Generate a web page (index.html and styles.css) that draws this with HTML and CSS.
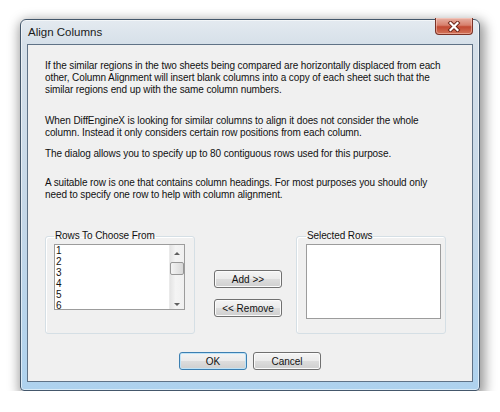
FILE: index.html
```html
<!DOCTYPE html>
<html lang="en">
<head>
    <meta charset="UTF-8">
    <meta name="viewport" content="width=device-width, initial-scale=1.0">
    <link rel="stylesheet" href="styles.css">
</head>
<body>
<div class="window">
    <div class="titlebar">
        <span class="title">Align Columns</span>
        <div class="close-btn">
            <svg width="14" height="11" viewBox="0 0 14 11">
                <path d="M3.5 2 L10.5 9 M10.5 2 L3.5 9" stroke="#6a2418" stroke-width="4" stroke-linecap="square"/>
                <path d="M3.5 2 L10.5 9 M10.5 2 L3.5 9" stroke="#ffffff" stroke-width="2.2" stroke-linecap="square"/>
            </svg>
        </div>
    </div>
    <div class="client">
        <p class="para p1">If the similar regions in the two sheets being compared are horizontally displaced from each<br>
            other, Column Alignment will insert blank columns into a copy of each sheet such that the<br>
            similar regions end up with the same column numbers.</p>
        <p class="para p2">When DiffEngineX is looking for similar columns to align it does not consider the whole<br>
            column. Instead it only considers certain row positions from each column.</p>
        <p class="para p3">The dialog allows you to specify up to 80 contiguous rows used for this purpose.</p>
        <p class="para p4">A suitable row is one that contains column headings. For most purposes you should only<br>
            need to specify one row to help with column alignment.</p>

        <div class="lists">
            <fieldset class="group group-left">
                <legend>Rows To Choose From</legend>
                <div class="listbox listbox-rows">
                    <ul class="items">
                        <li>1</li>
                        <li>2</li>
                        <li>3</li>
                        <li>4</li>
                        <li>5</li>
                        <li>6</li>
                    </ul>
                    <div class="scrollbar">
                        <div class="arrow arrow-up"></div>
                        <div class="track"><div class="thumb"></div></div>
                        <div class="arrow arrow-down"></div>
                    </div>
                </div>
            </fieldset>
            <div class="move-buttons">
                <button class="btn">Add &gt;&gt;</button>
                <button class="btn">&lt;&lt; Remove</button>
            </div>
            <fieldset class="group group-right">
                <legend>Selected Rows</legend>
                <div class="listbox listbox-selected"></div>
            </fieldset>
        </div>

        <div class="dialog-buttons">
            <button class="btn btn-default">OK</button>
            <button class="btn">Cancel</button>
        </div>
    </div>
</div>
</body>
</html>
```

FILE: styles.css
```css
body {
    margin: 0;
    background-color: #FFFFFF;
    font-family: "Liberation Sans", Arial, sans-serif;
    color: #111;
}

.window {
    margin: 19px 0 0 20px;
    width: 460px;
    height: 372px;
    box-sizing: border-box;
    padding: 0 6px 8px 6px;
    display: flex;
    flex-direction: column;
    border: 1px solid #44576b;
    border-radius: 6px 6px 4px 4px;
    background: linear-gradient(to bottom, #e4eaf0 0px, #d6e0e9 24px, #c4d7e8 55%, #aed2ee 100%);
    box-shadow: 2px 4px 12px 3px rgba(0, 0, 0, 0.4), inset 0 0 0 1px rgba(255, 255, 255, 0.55);
}

.titlebar {
    height: 24px;
    display: flex;
    align-items: center;
    justify-content: space-between;
}

.title {
    margin-left: 1px;
    font-size: 11.5px;
    color: #1a1a1a;
}

.close-btn {
    align-self: flex-start;
    margin-top: -2px;
    width: 38px;
    height: 17px;
    box-sizing: border-box;
    display: flex;
    align-items: center;
    justify-content: center;
    border: 1px solid #7a3226;
    border-top: none;
    border-radius: 0 0 4px 4px;
    background: linear-gradient(to bottom, #e7b1a4 0%, #d7806d 45%, #c24a33 55%, #d2745a 100%);
    box-shadow: inset 0 0 0 1px rgba(255, 220, 210, 0.45);
}

.client {
    flex: 1;
    background-color: #f0f0f0;
    border: 1px solid #5f7286;
    padding: 15px 17px 0 17px;
}

.para {
    margin: 0;
    font-size: 10px;
    line-height: 12px;
    letter-spacing: -0.1px;
    white-space: nowrap;
}

.p2 {
    margin-top: 19px;
}

.p3 {
    margin-top: 9px;
}

.p4 {
    margin-top: 17px;
}

.lists {
    margin-top: 29px;
    display: flex;
}

.group {
    margin: 0;
    min-width: 0;
    width: 150px;
    box-sizing: border-box;
    border: 1px solid #d5dfe5;
    border-radius: 3px;
    box-shadow: inset 1px 1px 0 #ffffff;
    padding: 2px 9px 14px 8px;
}

.group legend {
    padding: 0 1px;
    font-size: 10px;
    line-height: 12px;
    letter-spacing: -0.1px;
}

.group-right {
    margin-left: 14px;
    padding: 2px 4px 14px 9px;
}

.listbox {
    box-sizing: border-box;
    background-color: #ffffff;
    border: 1px solid #9c9c9c;
}

.listbox-rows {
    height: 66px;
    display: flex;
    overflow: hidden;
}

.listbox-selected {
    height: 75px;
}

.items {
    flex: 1;
    list-style: none;
    margin: 0;
    padding: 0 0 0 1px;
    font-size: 10px;
    line-height: 11px;
}

.scrollbar {
    width: 14px;
    display: flex;
    flex-direction: column;
    background: linear-gradient(to right, #e4e4e4, #f4f4f4 40%, #f0f0f0);
    border-left: 1px solid #eaeaea;
}

.arrow {
    height: 16px;
    display: flex;
    align-items: center;
    justify-content: center;
}

.arrow-up::before {
    content: "";
    border-left: 3px solid transparent;
    border-right: 3px solid transparent;
    border-bottom: 3px solid #606060;
}

.arrow-down::before {
    content: "";
    margin-top: 6px;
    border-left: 3px solid transparent;
    border-right: 3px solid transparent;
    border-top: 3px solid #606060;
}

.track {
    flex: 1;
}

.thumb {
    margin: 1px 0 0 0;
    height: 13px;
    box-sizing: border-box;
    border: 1px solid #979797;
    border-radius: 2px;
    background: linear-gradient(to right, #f4f4f4, #e6e6e6 50%, #d8d8d8 100%);
}

.move-buttons {
    margin: 40px 0 0 19px;
    display: flex;
    flex-direction: column;
    gap: 11px;
}

.btn {
    width: 68px;
    height: 18px;
    box-sizing: border-box;
    padding: 0;
    font-family: "Liberation Sans", Arial, sans-serif;
    font-size: 10px;
    color: #111;
    border: 1px solid #707070;
    border-radius: 3px;
    background: linear-gradient(to bottom, #f4f4f4 0%, #ebebeb 50%, #dddddd 51%, #cfcfcf 100%);
    box-shadow: inset 0 0 0 1px #fbfbfb;
}

.btn-default {
    border-color: #3c7fb1;
    box-shadow: inset 0 0 0 1px #bfe3f7;
}

.dialog-buttons {
    margin-top: 18px;
    display: flex;
    justify-content: center;
    gap: 6px;
}
```
